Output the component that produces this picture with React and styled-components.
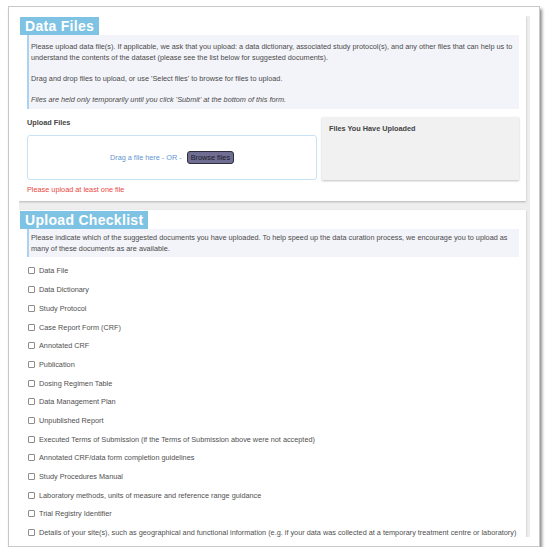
import React from "react";
import styled, { createGlobalStyle } from "styled-components";

const GlobalStyle = createGlobalStyle`
  body {
    margin: 0;
    background: #ffffff;
    font-family: "Liberation Sans", Arial, sans-serif;
  }
`;

const checklist = [
  "Data File",
  "Data Dictionary",
  "Study Protocol",
  "Case Report Form (CRF)",
  "Annotated CRF",
  "Publication",
  "Dosing Regimen Table",
  "Data Management Plan",
  "Unpublished Report",
  "Executed Terms of Submission (if the Terms of Submission above were not accepted)",
  "Annotated CRF/data form completion guidelines",
  "Study Procedures Manual",
  "Laboratory methods, units of measure and reference range guidance",
  "Trial Registry Identifier",
  "Details of your site(s), such as geographical and functional information (e.g. if your data was collected at a temporary treatment centre or laboratory)",
];

export default function App() {
  return (
    <>
      <GlobalStyle />
      <Frame>
        <Viewport>
          <Card>
            <Tab>Data Files</Tab>
            <CardBody>
              <Info>
                <p>
                  Please upload data file(s). If applicable, we ask that you upload: a data dictionary, associated study protocol(s), and any other files that can help us to
                  <br />
                  understand the contents of the dataset (please see the list below for suggested documents).
                </p>
                <p>Drag and drop files to upload, or use 'Select files' to browse for files to upload.</p>
                <p>
                  <em>Files are held only temporarily until you click 'Submit' at the bottom of this form.</em>
                </p>
              </Info>
              <UploadRow>
                <UploadColumn>
                  <Label>Upload Files</Label>
                  <DropZone>
                    <DropText>Drag a file here - OR -</DropText>
                    <BrowseButton type="button">Browse files</BrowseButton>
                  </DropZone>
                </UploadColumn>
                <UploadedPanel>
                  <Label>Files You Have Uploaded</Label>
                </UploadedPanel>
              </UploadRow>
              <ErrorText>Please upload at least one file</ErrorText>
            </CardBody>
          </Card>
          <Card>
            <Tab>Upload Checklist</Tab>
            <CardBody>
              <Info $compact>
                <p>
                  Please indicate which of the suggested documents you have uploaded. To help speed up the data curation process, we encourage you to upload as
                  <br />
                  many of these documents as are available.
                </p>
              </Info>
              <CheckList>
                {checklist.map((item) => (
                  <CheckItem key={item}>
                    <Box />
                    <span>{item}</span>
                  </CheckItem>
                ))}
              </CheckList>
            </CardBody>
          </Card>
        </Viewport>
      </Frame>
    </>
  );
}

const Frame = styled.div`
  box-sizing: border-box;
  margin: 6px 0 0 8px;
  width: 532px;
  height: 541px;
  padding: 9px 9px 0 10px;
  background: #ffffff;
  border: 1px solid #c9c9c9;
  box-shadow: 2px 3px 3px rgba(0, 0, 0, 0.45);
`;

const Viewport = styled.div`
  box-sizing: border-box;
  height: 521px;
  overflow: hidden;
  background: #eeeeee;
  padding-right: 4px;
`;

const Card = styled.section`
  background: #ffffff;
  padding: 1px 0 0 1px;
  margin-bottom: 9px;
  box-shadow: 0 1px 2px rgba(0, 0, 0, 0.25);
`;

const Tab = styled.h2`
  display: inline-block;
  margin: 0;
  height: 18px;
  padding: 0 5px;
  background: #7ec2e4;
  color: #ffffff;
  font-size: 14px;
  font-weight: bold;
  line-height: 19px;
  letter-spacing: 0.3px;
  vertical-align: top;
`;

const CardBody = styled.div`
  padding: 0 7px 6px 7px;
`;

const Info = styled.div`
  background: #f3f4f9;
  border-left: 2px solid #a9d3ee;
  padding: ${(p) => (p.$compact ? "3px 4px 3px 2px" : "6px 4px 4px 2px")};
  font-size: 7.3px;
  line-height: 11px;
  color: #4a4a4a;
  white-space: nowrap;

  p {
    margin: 0;
  }
  p + p {
    margin-top: 10px;
  }
`;

const UploadRow = styled.div`
  display: flex;
  gap: 5px;
  margin-top: 8px;
  align-items: flex-start;
`;

const UploadColumn = styled.div`
  flex: 0 0 290px;
`;

const Label = styled.div`
  font-size: 7.3px;
  font-weight: bold;
  line-height: 11px;
  color: #444444;
`;

const DropZone = styled.div`
  box-sizing: border-box;
  margin-top: 7px;
  height: 45px;
  border: 1px solid #c6e2f4;
  border-radius: 3px;
  display: flex;
  align-items: center;
  justify-content: center;
  gap: 5px;
`;

const DropText = styled.span`
  font-size: 7.3px;
  color: #5f95d0;
`;

const BrowseButton = styled.button`
  box-sizing: border-box;
  height: 13px;
  padding: 0 3px;
  background: #6f6d91;
  border: 1px solid #2e2e3e;
  border-radius: 3px;
  font-family: "Liberation Sans", Arial, sans-serif;
  font-size: 7.3px;
  line-height: 11px;
  color: #1c1c2a;
`;

const UploadedPanel = styled.div`
  box-sizing: border-box;
  flex: 1;
  height: 63px;
  padding: 6px 7px;
  background: #f1f1f1;
  box-shadow: 0 1px 2px rgba(0, 0, 0, 0.25);
`;

const ErrorText = styled.div`
  margin-top: 4px;
  font-size: 7.3px;
  line-height: 11px;
  color: #e8473f;
`;

const CheckList = styled.ul`
  list-style: none;
  margin: 0;
  padding: 4.6px 0 0 0;
`;

const CheckItem = styled.li`
  display: flex;
  align-items: center;
  gap: 4px;
  height: 18.7px;
  font-size: 7.3px;
  color: #505050;
  white-space: nowrap;
`;

const Box = styled.span`
  box-sizing: border-box;
  flex: 0 0 7px;
  width: 7px;
  height: 7px;
  margin-left: 1px;
  border: 1px solid #8c8c8c;
  border-radius: 1px;
  background: #ffffff;
`;
